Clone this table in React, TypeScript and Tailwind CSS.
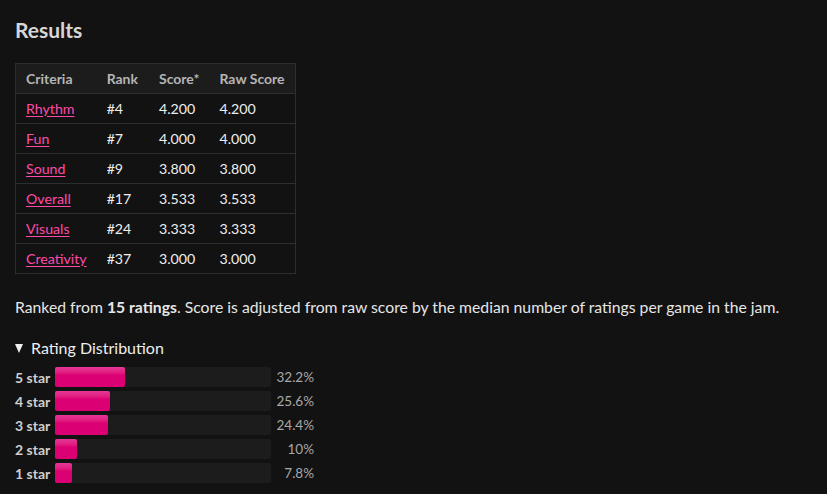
const criteria = [
  { name: 'Rhythm', rank: '#4', score: '4.200', raw: '4.200' },
  { name: 'Fun', rank: '#7', score: '4.000', raw: '4.000' },
  { name: 'Sound', rank: '#9', score: '3.800', raw: '3.800' },
  { name: 'Overall', rank: '#17', score: '3.533', raw: '3.533' },
  { name: 'Visuals', rank: '#24', score: '3.333', raw: '3.333' },
  { name: 'Creativity', rank: '#37', score: '3.000', raw: '3.000' },
]

const distribution = [
  { label: '5 star', pct: 32.2, text: '32.2%' },
  { label: '4 star', pct: 25.6, text: '25.6%' },
  { label: '3 star', pct: 24.4, text: '24.4%' },
  { label: '2 star', pct: 10, text: '10%' },
  { label: '1 star', pct: 7.8, text: '7.8%' },
]

export default function App() {
  return (
    <div className="min-h-[494px] bg-[#121212] text-[#dddddd] font-['Lato',sans-serif] px-[15px] pt-[16px]">
      <h2 className="text-[21px] font-bold leading-[28px] text-[#d6d6d6]">Results</h2>

      <table className="mt-[19px] border border-[#2e2e2e] border-collapse text-[14.2px]">
        <thead>
          <tr className="bg-[#1c1c1c] h-[30px]">
            <th className="px-[10px] text-left font-bold text-[14px] text-[#b5b5b5]">Criteria</th>
            <th className="pl-[10px] pr-[11px] text-left font-bold text-[14px] text-[#b5b5b5]">Rank</th>
            <th className="px-[10px] text-left font-bold text-[14px] text-[#b5b5b5]">Score*</th>
            <th className="px-[10px] text-left font-bold text-[14px] text-[#b5b5b5]">Raw Score</th>
          </tr>
        </thead>
        <tbody>
          {criteria.map((c) => (
            <tr key={c.name} className="h-[30px] border-t border-[#2e2e2e]">
              <td className="px-[10px]">
                <a href="#" className="text-[#ff4aa8] underline underline-offset-2">{c.name}</a>
              </td>
              <td className="pl-[10px] pr-[11px] text-[#eeeeee]">{c.rank}</td>
              <td className="px-[10px] text-[#eeeeee]">{c.score}</td>
              <td className="px-[10px] text-[#eeeeee]">{c.raw}</td>
            </tr>
          ))}
        </tbody>
      </table>

      <p className="mt-[21px] text-[15.75px] leading-[24px] text-[#e6e6e6]">
        Ranked from <strong className="font-bold">15 ratings</strong>. Score is adjusted from raw score by the median number of ratings per game in the jam.
      </p>

      <div className="mt-[18px]">
        <div className="flex items-center gap-[8px] text-[16px] leading-[22px] text-[#eeeeee]">
          <span className="w-0 h-0 border-l-[4.5px] border-r-[4.5px] border-t-[9px] border-l-transparent border-r-transparent border-t-[#eeeeee]" />
          <span>Rating Distribution</span>
        </div>
        <div className="mt-[8px] flex flex-col gap-[4px]">
          {distribution.map((d) => (
            <div key={d.label} className="flex items-center h-[20px]">
              <span className="w-[40px] text-[14px] font-bold text-[#cfcfcf]">{d.label}</span>
              <div className="w-[216px] h-[20px] bg-[#1c1c1c] rounded-[2px]">
                <div
                  className="h-full rounded-[2px] bg-gradient-to-b from-[#e8379a] to-[#dc0075] to-40%"
                  style={{ width: `${d.pct}%` }}
                />
              </div>
              <span className="w-[43px] text-right text-[13.5px] text-[#a8a8a8]">{d.text}</span>
            </div>
          ))}
        </div>
      </div>
    </div>
  )
}
